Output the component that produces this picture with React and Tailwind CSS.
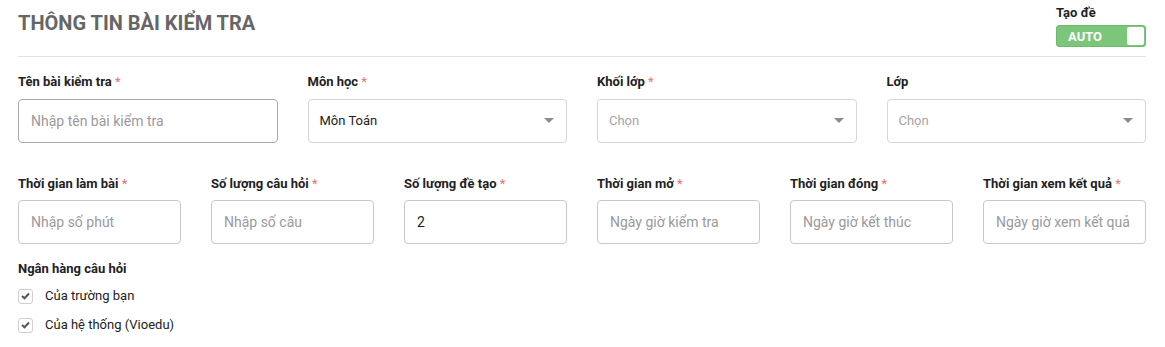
import React from "react";

const font = { fontFamily: "Roboto, 'Noto Sans', sans-serif" };

function Label({ text, required }) {
  return (
    <div className="text-[13px] font-bold text-[#222] leading-[16px] h-[16px] whitespace-nowrap">
      {text}
      {required && <span className="text-[#e57373] font-normal"> *</span>}
    </div>
  );
}

function TextInput({ placeholder, value, dark }) {
  return (
    <div
      className={`h-[44px] rounded-[4px] border ${dark ? "border-[#a8a8a8]" : "border-[#c8c8c8]"} flex items-center px-[12px] text-[14px] overflow-hidden whitespace-nowrap`}
    >
      {value ? (
        <span className="text-[#222]">{value}</span>
      ) : (
        <span className="text-[#9a9a9a]">{placeholder}</span>
      )}
    </div>
  );
}

function Select({ value, placeholder }) {
  return (
    <div className="h-[44px] rounded-[4px] border border-[#d6d6d6] flex items-center justify-between pl-[11px] pr-[12px] text-[13px]">
      {value ? <span className="text-[#222]">{value}</span> : <span className="text-[#a5a5a5]">{placeholder}</span>}
      <svg width="10" height="6" viewBox="0 0 10 6">
        <path d="M0 0 L10 0 L5 5 Z" fill="#8c8c8c" />
      </svg>
    </div>
  );
}

function Check({ label }) {
  return (
    <div className="flex items-center h-[16px]">
      <div className="w-[15px] h-[15px] rounded-[3px] border border-[#cfcfcf] flex items-center justify-center">
        <svg width="9" height="8" viewBox="0 0 9 8">
          <path d="M1 4 L3.5 6.3 L8 1.5" stroke="#555" strokeWidth="2" fill="none" />
        </svg>
      </div>
      <span className="ml-[12px] text-[13px] text-[#222]">{label}</span>
    </div>
  );
}

export default function App() {
  return (
    <div className="w-[1165px] h-[347px] bg-white px-[18px] relative" style={font}>
      <div className="flex justify-between items-start h-[57px] border-b border-[#e2e2e2] w-[1128px]">
        <h1 className="text-[20px] font-bold text-[#666] mt-[10px] leading-[26px]">THÔNG TIN BÀI KIỂM TRA</h1>
        <div className="mt-[5px] w-[90px]">
          <div className="text-[13px] font-bold text-[#222] leading-[15px]">Tạo đề</div>
          <div className="mt-[5px] h-[22px] rounded-[3px] bg-[#7bc67b] border border-[#6cba6c] flex items-center justify-between pl-[11px] pr-[1px]">
            <span className="text-white text-[13px] font-bold leading-none">AUTO</span>
            <div className="w-[17px] h-[18px] bg-white rounded-[2px]" />
          </div>
        </div>
      </div>

      <div className="grid grid-cols-4 gap-x-[30px] mt-[17px] w-[1128px]">
        <div>
          <Label text="Tên bài kiểm tra" required />
          <div className="mt-[9px]"><TextInput placeholder="Nhập tên bài kiểm tra" dark /></div>
        </div>
        <div>
          <Label text="Môn học" required />
          <div className="mt-[9px]"><Select value="Môn Toán" /></div>
        </div>
        <div>
          <Label text="Khối lớp" required />
          <div className="mt-[9px]"><Select placeholder="Chọn" /></div>
        </div>
        <div>
          <Label text="Lớp" />
          <div className="mt-[9px]"><Select placeholder="Chọn" /></div>
        </div>
      </div>

      <div className="grid grid-cols-6 gap-x-[30px] mt-[33px] w-[1128px]">
        {[
          ["Thời gian làm bài", "Nhập số phút"],
          ["Số lượng câu hỏi", "Nhập số câu"],
          ["Số lượng đề tạo", "", "2"],
          ["Thời gian mở", "Ngày giờ kiểm tra"],
          ["Thời gian đóng", "Ngày giờ kết thúc"],
          ["Thời gian xem kết quả", "Ngày giờ xem kết quả"],
        ].map(([l, p, v]) => (
          <div key={l}>
            <Label text={l} required />
            <div className="mt-[8px]"><TextInput placeholder={p} value={v} /></div>
          </div>
        ))}
      </div>

      <div className="mt-[17px]">
        <Label text="Ngân hàng câu hỏi" />
        <div className="mt-[11px] flex flex-col gap-[13px]">
          <Check label="Của trường bạn" />
          <Check label="Của hệ thống (Vioedu)" />
        </div>
      </div>
    </div>
  );
}
